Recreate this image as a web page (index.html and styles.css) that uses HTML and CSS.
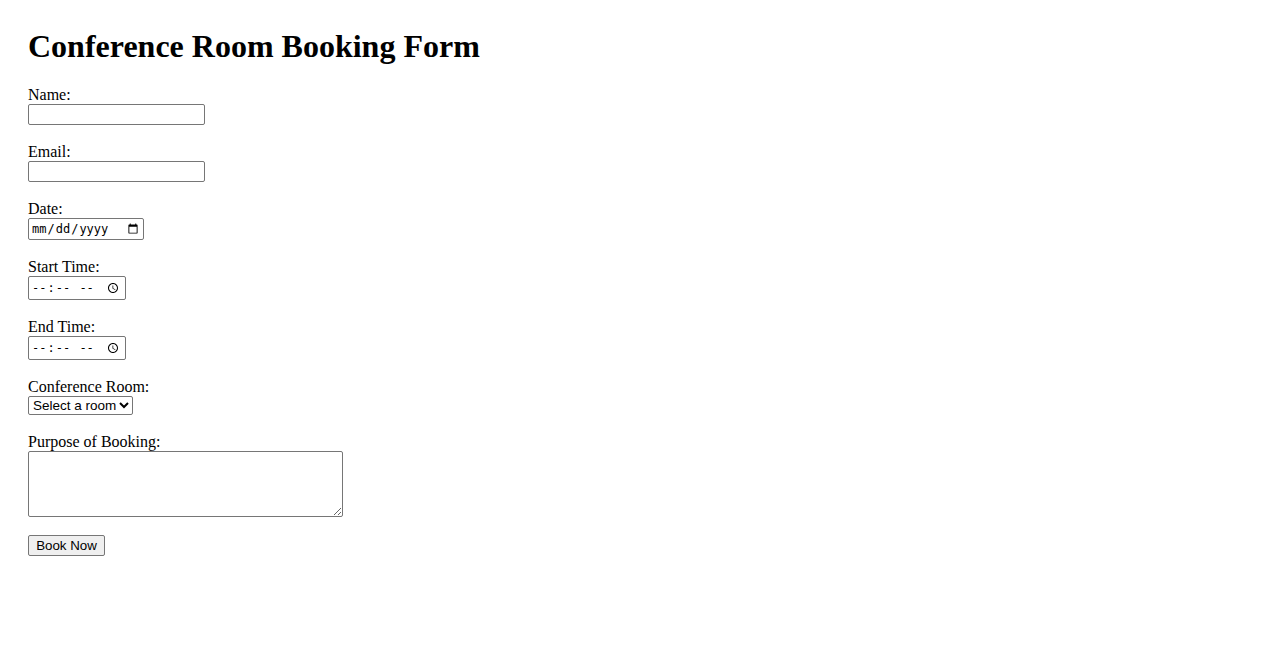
FILE: index.html
```html
<!DOCTYPE html>
<html>
<head>
<meta charset="utf-8">
<title>Conference Room Booking Form</title>
<link rel="stylesheet" href="styles.css">
</head>
<body class="page">
<h1 class="title">Conference Room Booking Form</h1>
<form class="form">
  <div class="field">
    <label class="label" for="name">Name:</label>
    <input class="ctl ctl-text" type="text" id="name">
  </div>
  <div class="field">
    <label class="label" for="email">Email:</label>
    <input class="ctl ctl-text" type="email" id="email">
  </div>
  <div class="field">
    <label class="label" for="date">Date:</label>
    <input class="ctl ctl-date" type="date" id="date">
  </div>
  <div class="field">
    <label class="label" for="start">Start Time:</label>
    <input class="ctl ctl-time" type="time" id="start">
  </div>
  <div class="field">
    <label class="label" for="end">End Time:</label>
    <input class="ctl ctl-time" type="time" id="end">
  </div>
  <div class="field">
    <label class="label" for="room">Conference Room:</label>
    <select class="ctl ctl-select" id="room">
      <option>Select a room</option>
    </select>
  </div>
  <div class="field">
    <label class="label" for="purpose">Purpose of Booking:</label>
    <textarea class="ctl ctl-area" id="purpose"></textarea>
  </div>
  <div class="field">
    <button class="btn" type="button">Book Now</button>
  </div>
</form>
</body>
</html>
```

FILE: styles.css
```css
html, body { background: #fff; }
.page {
  margin: 0;
  padding: 28px 28px;
  font-family: "Liberation Serif", "Times New Roman", serif;
  font-size: 16px;
  color: #000;
}
.title {
  margin: 0 0 21px 0;
  font-size: 32px;
  font-weight: bold;
  line-height: 37px;
}
.form { display: flex; flex-direction: column; align-items: flex-start; }
.field {
  display: flex;
  flex-direction: column;
  align-items: flex-start;
  margin-bottom: 18px;
}
.label {
  display: block;
  line-height: 18px;
}
.ctl {
  box-sizing: border-box;
  margin: 0;
  font-family: "Liberation Sans", Arial, sans-serif;
  font-size: 13.33px;
  border: 1px solid #767676;
  border-radius: 2px;
  background: #fff;
  color: #000;
}
.ctl-text { width: 177px; height: 21px; padding: 1px 2px; }
.ctl-date { width: 116px; height: 22px; padding: 1px 2px; font-family: "DejaVu Sans Mono", monospace; font-size: 12px; }
.ctl-time { width: 98px; height: 24px; padding: 1px 2px; font-family: "DejaVu Sans Mono", monospace; font-size: 12px; }
.ctl-select { width: 105px; height: 19px; padding: 0; font-size: 13.5px; }
.ctl-area { width: 315px; height: 66px; resize: both; }
.btn {
  box-sizing: border-box;
  width: 77px;
  height: 21px;
  margin: 0;
  padding: 1px 6px;
  font-family: "Liberation Sans", Arial, sans-serif;
  font-size: 13.33px;
  color: #000;
  background: #efefef;
  border: 1px solid #767676;
  border-radius: 2px;
}
```
